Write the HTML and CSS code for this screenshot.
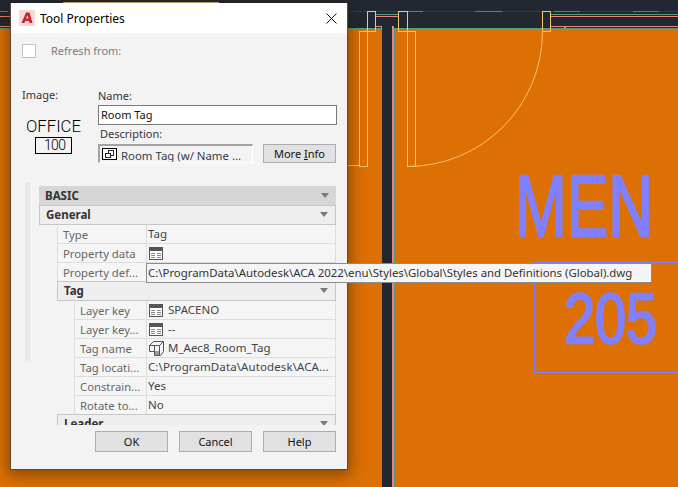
FILE: index.html
```html
<!DOCTYPE html>
<html lang="en">
<head>
<meta charset="utf-8">
<title>Tool Properties</title>
<link rel="stylesheet" href="styles.css">
</head>
<body>
<div class="desktop">
  <svg class="cad" width="678" height="487" viewBox="0 0 678 487">
    <rect class="orange" x="0" y="0" width="678" height="487"/>
    <rect class="dark" x="0" y="0" width="678" height="28"/>
    <rect class="edge" x="0" y="28" width="678" height="1"/>
    <rect class="dark" x="382" y="28" width="10" height="459"/>
    <rect class="green" x="381" y="28" width="1" height="459"/>
    <rect class="pink" x="381" y="26" width="1" height="3"/>
    <rect class="pink" x="392" y="26" width="2" height="461"/>
    <rect class="green" x="394" y="28" width="1" height="459"/>
    <rect class="green" x="395" y="28" width="283" height="1"/>
    <rect class="green" x="347" y="28" width="34" height="1"/>
    <rect class="green" x="0" y="28" width="10" height="1"/>
    <rect class="pink" x="0" y="26" width="10" height="1"/>
    <rect class="pink" x="376" y="26" width="6" height="1"/>
    <rect class="pink" x="551" y="26" width="127" height="1"/>
    <rect class="pink" x="0" y="16" width="10" height="1"/>
    <rect class="pink" x="376" y="16" width="22" height="1"/>
    <rect class="pink" x="551" y="16" width="127" height="1"/>
    <rect class="green" x="376" y="14" width="22" height="1"/>
    <rect class="green" x="551" y="14" width="127" height="1"/>
    <rect class="red" x="0" y="11" width="678" height="1"/>
    <rect class="teal" x="0" y="11" width="8" height="1"/>
    <rect class="teal" x="408" y="11" width="15" height="1"/>
    <rect class="teal" x="475" y="11" width="27" height="1"/>
    <rect class="teal" x="554" y="11" width="26" height="1"/>
    <rect class="teal" x="633" y="11" width="26" height="1"/>
    <rect class="tan-fill" x="63" y="2" width="156" height="1"/>
    <rect class="tick" x="392" y="103" width="2" height="1"/>
    <rect class="tick" x="392" y="362" width="2" height="1"/>
    <rect class="tick" x="392" y="376" width="2" height="2"/>
    <rect class="tick" x="392" y="391" width="2" height="1"/>
    <rect class="tick" x="392" y="418" width="2" height="2"/>
    <rect class="tick" x="392" y="455" width="2" height="1"/>
    <rect class="tick" x="564" y="26" width="2" height="2"/>
    <g class="door">
      <rect x="367.5" y="11.5" width="8" height="20"/>
      <rect x="359.5" y="31.5" width="8" height="135"/>
      <rect x="398.5" y="11.5" width="9" height="20"/>
      <rect x="407.5" y="31.5" width="8" height="135"/>
      <rect x="542.5" y="11.5" width="8" height="20"/>
      <path d="M542.5 31.5A135 135 0 0 1 407.5 166.5"/>
      <path d="M347 165.5H359.5"/>
    </g>
    <text class="cad-text" x="515" y="236" font-size="87" textLength="138" lengthAdjust="spacingAndGlyphs">MEN</text>
    <text class="cad-text" x="564" y="343" font-size="70" textLength="93" lengthAdjust="spacingAndGlyphs">205</text>
    <path class="room-box" d="M678 262.5H534.5V372.5H678"/>
  </svg>

  <svg class="sprites" width="0" height="0">
    <symbol id="grid-icon" viewBox="0 0 14 13">
      <rect class="i-frame" x="0.5" y="0.5" width="13" height="12"/>
      <rect class="i-head" x="0" y="0" width="14" height="4"/>
      <path class="i-line" d="M2 6.5H6M8 6.5H12M2 8.5H6M8 8.5H12M2 10.5H6M8 10.5H12"/>
    </symbol>
  </svg>

  <div class="dialog">
    <div class="titlebar">
      <svg class="app-icon" width="16" height="16" viewBox="0 0 16 16">
        <rect class="app-bg" width="16" height="16"/>
        <path class="app-a" d="M2.5 13L7 2.5H10.5L13.5 13H10.5L10 11H6.2L5.5 13ZM7 8.6H9.4L8.6 5.2Z"/>
      </svg>
      <span class="title">Tool Properties</span>
      <svg class="close" width="11" height="11" viewBox="0 0 11 11">
        <path d="M0.5 0.5L10.5 10.5M10.5 0.5L0.5 10.5"/>
      </svg>
    </div>
    <div class="body">
      <div class="refresh">
        <span class="checkbox"></span>
        <span class="disabled">Refresh from:</span>
      </div>
      <div class="identity">
        <div class="image-col">
          <div class="label">Image:</div>
          <svg class="preview" width="60" height="40" viewBox="0 0 60 40">
            <text class="preview-text" x="3" y="16" font-size="17" textLength="55" lengthAdjust="spacingAndGlyphs">OFFICE</text>
            <rect class="preview-box" x="12.5" y="21.5" width="36" height="16"/>
            <text class="preview-text" x="21" y="34" font-size="14" textLength="22" lengthAdjust="spacing">100</text>
          </svg>
        </div>
        <div class="fields">
          <div class="label">Name:</div>
          <div class="input">Room Tag</div>
          <div class="label desc-label">Description:</div>
          <div class="desc-row">
            <div class="desc-field">
              <svg class="desc-icon" width="15" height="12" viewBox="0 0 15 12">
                <rect class="di-frame" x="0.5" y="0.5" width="14" height="11"/>
                <rect class="di-sq" x="6.5" y="2.5" width="5" height="5"/>
                <rect class="di-sq" x="3.5" y="5.5" width="5" height="4"/>
              </svg>
              <span class="desc-text">Room Tag (w/ Name ...</span>
            </div>
            <button class="btn" type="button">More <u>I</u>nfo</button>
          </div>
        </div>
      </div>
      <div class="palette-wrap">
        <div class="scrolltrack"></div>
        <div class="palette">
          <div class="head basic"><b>BASIC</b><i class="arrow"></i></div>
          <div class="head general"><b>General</b><i class="arrow"></i></div>
          <div class="lvl1">
            <div class="row"><span class="k">Type</span><span class="v">Tag</span></div>
            <div class="row"><span class="k">Property data</span><span class="v"><svg class="gi"><use href="#grid-icon"/></svg></span></div>
            <div class="row"><span class="k">Property def...</span><span class="v"></span></div>
            <div class="head sub"><b>Tag</b><i class="arrow"></i></div>
            <div class="lvl2">
              <div class="row"><span class="k">Layer key</span><span class="v"><svg class="gi"><use href="#grid-icon"/></svg>SPACENO</span></div>
              <div class="row"><span class="k">Layer key...</span><span class="v"><svg class="gi"><use href="#grid-icon"/></svg>--</span></div>
              <div class="row"><span class="k">Tag name</span><span class="v">
                <svg class="cube" width="16" height="16" viewBox="0 0 16 16">
                  <path class="cube-s" d="M1.5 5.5L5.5 1.5H15.5V11.5L12.5 15.5H6.5V11.5H1.5Z"/>
                  <path class="cube-s" d="M1.5 5.5H11.5V15.5M11.5 5.5L15.5 1.5M6.5 5.5V11.5H11.5"/>
                  <rect class="cube-f" x="7" y="11" width="4" height="4"/>
                </svg>M_Aec8_Room_Tag</span></div>
              <div class="row"><span class="k">Tag locati...</span><span class="v path">C:\ProgramData\Autodesk\ACA...</span></div>
              <div class="row"><span class="k">Constrain...</span><span class="v">Yes</span></div>
              <div class="row"><span class="k">Rotate to...</span><span class="v">No</span></div>
            </div>
            <div class="head sub"><b>Leader</b><i class="arrow"></i></div>
          </div>
        </div>
      </div>
      <div class="footer">
        <button class="btn" type="button">OK</button>
        <button class="btn" type="button">Cancel</button>
        <button class="btn" type="button">Help</button>
      </div>
    </div>
  </div>

  <div class="tooltip">C:\ProgramData\Autodesk\ACA 2022\enu\Styles\Global\Styles and Definitions (Global).dwg</div>
</div>
</body>
</html>
```

FILE: styles.css
```css
* { box-sizing: border-box; }
html, body { margin: 0; padding: 0; }
body { width: 678px; height: 487px; overflow: hidden; font-family: "Noto Sans", "Open Sans", sans-serif; font-size: 11px; color: #222; }
.desktop { position: relative; width: 678px; height: 487px; overflow: hidden; background: #dc7005; }
.cad { position: absolute; left: 0; top: 0; display: block; }
.sprites { position: absolute; }
.orange { fill: #dc7005; }
.dark { fill: #222831; }
.edge { fill: #b8640f; }
.green { fill: #4f9f7f; }
.pink { fill: #f08080; }
.red { fill: #8a1218; }
.teal { fill: #1c9aa0; }
.tan-fill { fill: #d9b27a; }
.tick { fill: #f58a3c; }
.door { fill: none; stroke: #ffc070; stroke-width: 1; }
.cad-text { font-family: "Liberation Sans", sans-serif; fill: #8080ff; stroke: #8080ff; stroke-width: 2.4; stroke-linejoin: round; }
.room-box { fill: none; stroke: #8080ff; stroke-width: 1; }

.dialog { position: absolute; left: 10px; top: 3px; width: 338px; height: 467px; background: #f3f3f3; border: 1px solid #5e4a32; border-top: 0; box-shadow: 0 3px 14px 2px rgba(30, 20, 0, .45); }
.titlebar { display: flex; align-items: center; height: 30px; background: #fff; padding: 0 10px 0 8px; }
.app-icon { flex: none; margin-right: 5px; }
.app-bg { fill: #f4d9d8; }
.app-a { fill: #c2272f; }
.title { flex: 1; font-size: 12px; color: #000; }
.close { flex: none; }
.close path { fill: none; stroke: #111; stroke-width: 1; }

.body { padding: 11px 11px 0 0; }
.refresh { display: flex; align-items: center; height: 14px; padding-left: 11px; }
.checkbox { width: 14px; height: 14px; background: #fff; border: 1px solid #c4c4c4; margin-right: 15px; flex: none; }
.disabled { color: #7b7b7b; line-height: 12px; }

.identity { display: flex; height: 74px; margin-top: 30px; padding-left: 11px; }
.image-col { width: 76px; flex: none; margin-top: -1px; }
.label { height: 17px; line-height: 15px; color: #333; }
.preview { display: block; margin: 12px 0 0 1px; }
.preview-text { font-family: "Roboto", "Liberation Sans", sans-serif; font-weight: 300; fill: #000; }
.preview-box { fill: none; stroke: #000; stroke-width: 1; }
.fields { width: 239px; flex: none; }
.input { height: 20px; line-height: 18px; border: 1px solid #7a7a7a; background: #fff; padding-left: 2px; color: #111; }
.desc-label { height: 17px; margin-top: 2px; padding-left: 2px; line-height: 14px; }
.desc-row { display: flex; align-items: flex-end; gap: 10px; margin-right: 1px; }
.desc-field { display: flex; align-items: center; width: 155px; height: 19px; overflow: hidden; flex: none; border: 2px solid #a3a3a3; border-right: 1px solid #fff; border-bottom: 1px solid #fff; padding-left: 2px; }
.desc-icon { flex: none; margin-right: 4px; }
.di-frame { fill: #fff; stroke: #000; }
.di-sq { fill: #fff; stroke: #222; }
.desc-text { white-space: nowrap; color: #3a3a4a; font-size: 11.4px; line-height: 17px; height: 15px; overflow: hidden; }
.btn { display: block; width: 73px; height: 19px; padding: 0; background: #e1e1e1; border: 1px solid #adadad; font: inherit; color: #111; }

.palette-wrap { display: flex; margin-top: 20px; padding-left: 14px; height: 243px; }
.scrolltrack { width: 5px; height: 179px; background: #e8e8e8; border-radius: 2px; flex: none; margin-right: 9px; }
.palette { width: 297px; height: 239px; margin-top: 4px; overflow: hidden; flex: none; }
.head { display: flex; align-items: center; justify-content: space-between; padding: 0 6px 0 6px; color: #333; font-size: 11.5px; }
.head b { font-weight: 700; }
.basic { height: 19px; background: #d6d6d6; }
.general { height: 20px; background: #eeeeee; border: 1px solid #c6c6c6; padding-bottom: 2px; }
.sub { height: 20px; margin-top: -1px; background: #eeeeee; border: 1px solid #c6c6c6; padding-bottom: 2px; }
.arrow { width: 0; height: 0; border-left: 4px solid transparent; border-right: 4px solid transparent; border-top: 5px solid #7a7a7a; margin-right: 1px; }
.lvl1 { margin-left: 18px; }
.lvl2 { margin-left: 17px; }
.row { display: flex; height: 19px; line-height: 18px; background: #f5f5f5; border-left: 1px solid #ddd; border-right: 1px solid #ddd; border-bottom: 1px solid #ddd; white-space: nowrap; }
.k { flex: none; padding: 1px 0 0 5px; color: #666; font-size: 11.3px; overflow: hidden; }
.lvl1 > .row .k { width: 88px; }
.lvl2 > .row .k { width: 71px; }
.v { display: flex; align-items: center; flex: 1; padding-left: 1px; border-left: 1px solid #ddd; color: #444; font-size: 11.5px; overflow: hidden; }
.path { font-size: 11.5px; letter-spacing: .1px; }
.gi { width: 14px; height: 13px; flex: none; margin-right: 5px; margin-left: 1px; }
.i-frame { fill: #fff; stroke: #555; }
.i-head { fill: #555; }
.i-line { fill: none; stroke: #888; stroke-width: 1; }
.cube { flex: none; margin-right: 4px; }
.cube-s { fill: none; stroke: #555; stroke-width: 1; }
.cube-f { fill: #999; }

.footer { display: flex; justify-content: flex-end; gap: 11px; margin-top: 6px; }
.footer .btn { height: 21px; }

.tooltip { position: absolute; left: 146px; top: 263px; width: 506px; height: 20px; line-height: 18px; padding-left: 1px; font-size: 11.4px; background: #f5f5f5; border: 1px solid #8c8c8c; color: #333; white-space: nowrap; }
```
